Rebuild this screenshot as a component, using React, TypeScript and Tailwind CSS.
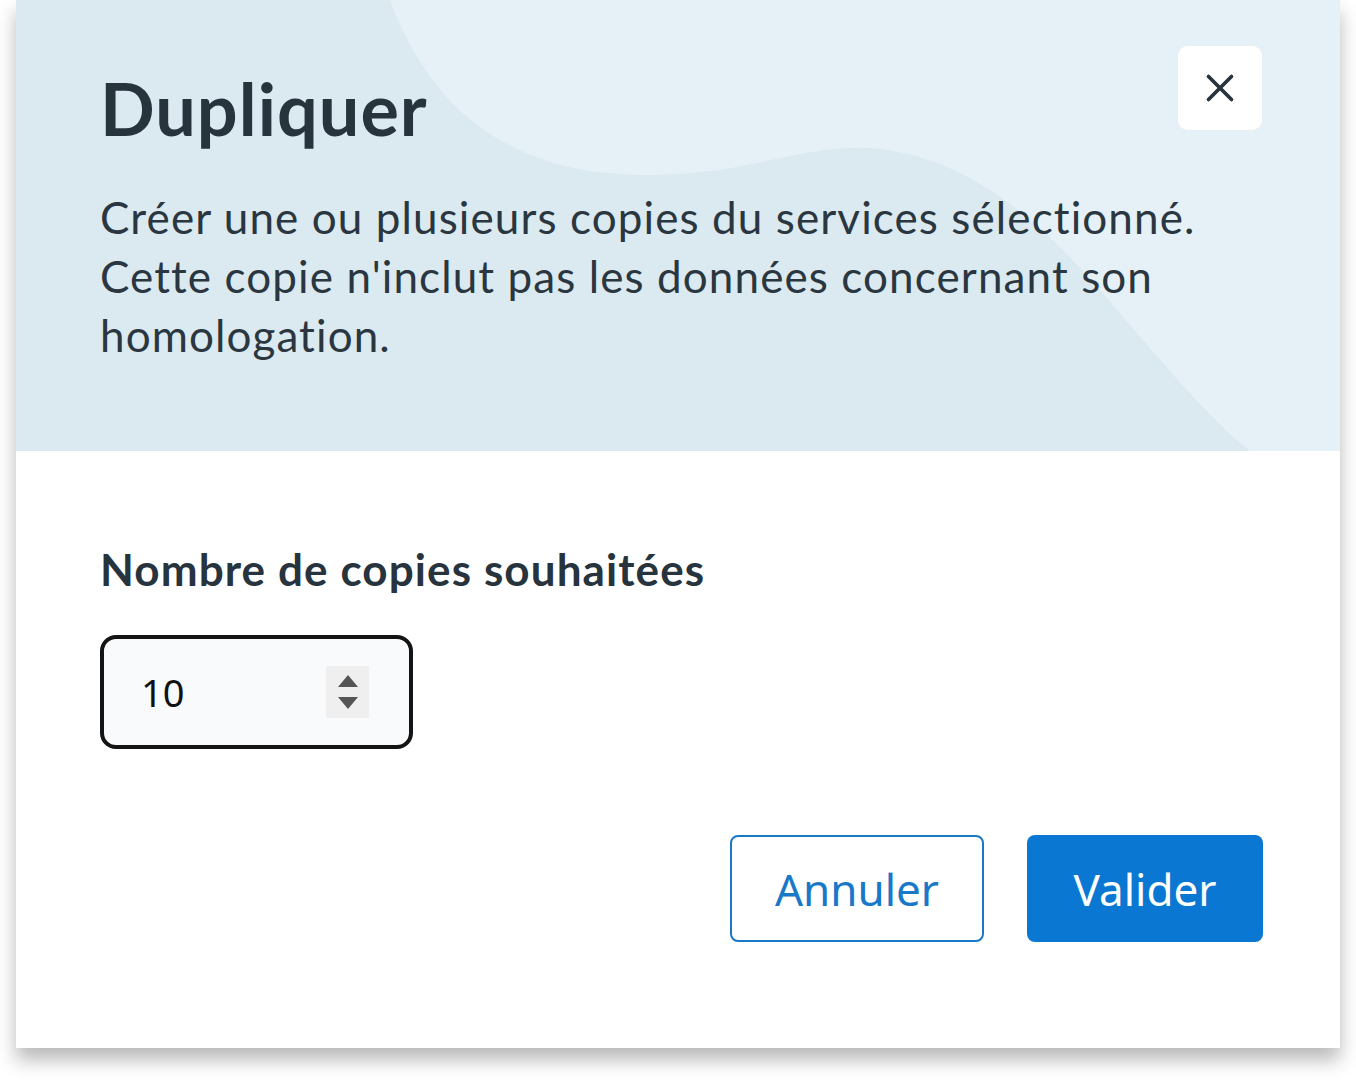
import React, { useState } from "react";
import { X } from "lucide-react";

const App = () => {
  const [copies, setCopies] = useState(10);

  return (
    <div className="w-[1356px] h-[1080px] bg-white overflow-hidden">
      {/* Modal */}
      <div className="ml-[16px] w-[1324px] h-[1048px] bg-white flex flex-col shadow-[0_12px_18px_rgba(0,0,0,0.28)]">
        {/* Header */}
        <div className="relative h-[451px] bg-[#dbeaf0] overflow-hidden pl-[84px] pr-[78px]">
          <svg
            className="absolute inset-0"
            width="1324"
            height="451"
            viewBox="16 0 1324 451"
            preserveAspectRatio="none"
          >
            <path
              d="M390 0 C 420 80, 470 140, 560 165 C 620 180, 680 175, 720 170 C 780 160, 820 146, 870 148 C 960 155, 1030 210, 1100 290 C 1160 360, 1210 420, 1250 451 L 1340 451 L 1340 0 Z"
              fill="#e5f1f6"
            />
          </svg>
          <div className="relative flex items-start justify-between pt-[46px]">
            <h1 className="font-['Lato',sans-serif] font-bold text-[72px] leading-none tracking-[1px] text-[#27333d] mt-[26px]">
              Dupliquer
            </h1>
            <button className="w-[84px] h-[84px] bg-white rounded-[10px] flex items-center justify-center text-[#27333d]">
              <X size={46} strokeWidth={1.9} />
            </button>
          </div>
          <p className="relative mt-[44px] font-['Lato',sans-serif] text-[44px] leading-[59px] tracking-[1.1px] text-[#2a3640] max-w-[1140px]">
            Créer une ou plusieurs copies du services sélectionné. Cette copie n'inclut pas les données concernant son
            homologation.
          </p>
        </div>

        {/* Body */}
        <div className="flex-1 pl-[84px] pr-[77px] pt-[93px]">
          <label className="block font-['Lato',sans-serif] font-bold text-[44px] leading-[50px] tracking-[1.1px] text-[#27333d]">
            Nombre de copies souhaitées
          </label>
          <div className="mt-[41px] w-[313px] h-[114px] border-[4px] border-[#141414] rounded-[16px] bg-[#f8fafc] flex items-center pl-[37px] pr-[40px]">
            <input
              type="text"
              value={copies}
              onChange={(e) => setCopies(Number(e.target.value) || 0)}
              className="flex-1 min-w-0 bg-transparent outline-none font-['Noto_Sans',sans-serif] text-[38px] text-[#111]"
            />
            <div className="w-[43px] h-[52px] bg-[#efefef] flex flex-col items-center justify-center gap-[10px]">
              <svg width="20" height="12" viewBox="0 0 20 12">
                <path d="M10 0 L20 12 L0 12 Z" fill="#555" />
              </svg>
              <svg width="20" height="12" viewBox="0 0 20 12">
                <path d="M0 0 L20 0 L10 12 Z" fill="#555" />
              </svg>
            </div>
          </div>

          <div className="mt-[86px] flex justify-end gap-[43px]">
            <button className="w-[254px] h-[107px] border-[2px] border-[#1a78c8] rounded-[8px] bg-white font-['Noto_Sans',sans-serif] text-[44px] text-[#1a78c8]">
              Annuler
            </button>
            <button className="w-[236px] h-[107px] rounded-[8px] bg-[#0a78d2] font-['Noto_Sans',sans-serif] text-[44px] text-white">
              Valider
            </button>
          </div>
        </div>
      </div>
    </div>
  );
};

export default App;
